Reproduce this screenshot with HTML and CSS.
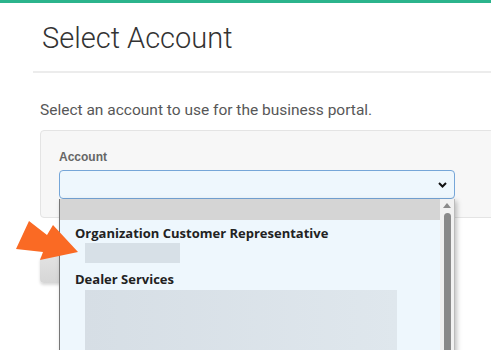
FILE: index.html
```html
<!DOCTYPE html>
<html lang="en">

<head>
  <meta charset="UTF-8">
  <meta name="viewport" content="width=device-width, initial-scale=1.0">
  <title>Select Account</title>
  <link rel="stylesheet" href="styles.css">
</head>

<body>
  <div class="top-bar"></div>

  <div class="header">
    <h1>Select Account</h1>
  </div>

  <div class="content">
    <p class="intro">Select an account to use for the business portal.</p>

    <div class="card">
      <label class="field-label">Account</label>
      <div class="select-wrap">
        <div class="select-box">
          <svg class="chevron" width="9" height="6" viewBox="0 0 9 6">
            <path d="M1 1 L4.5 4.5 L8 1" fill="none" stroke="#111" stroke-width="2" />
          </svg>
        </div>

        <div class="dropdown">
          <div class="option-empty"></div>
          <div class="group">
            <div class="group-title">Organization Customer Representative</div>
            <div class="redacted small"></div>
          </div>
          <div class="group">
            <div class="group-title">Dealer Services</div>
            <div class="redacted large"></div>
          </div>
          <div class="scrollbar">
            <svg class="scroll-up" width="8" height="5" viewBox="0 0 8 5">
              <path d="M0 5 L4 0 L8 5 Z" fill="#8a8a8a" />
            </svg>
            <div class="thumb"></div>
          </div>
        </div>
      </div>
    </div>

    <button class="continue-btn"></button>
  </div>

  <!-- arrow pointing at the first account -->
  <svg class="pointer-arrow" width="80" height="50" viewBox="0 0 80 50">
    <path d="M29 6 L47 20 L53 10 L78 37 L40 45 L43 37 L16 34 Z" fill="#fa6a24" />
  </svg>
</body>

</html>
```

FILE: styles.css
```css
body {
  margin: 0;
  padding: 0;
  background-color: #fff;
  color: #333;
  font-family: "Roboto", sans-serif;
  overflow: hidden;
  height: 350px;
  position: relative;
}

.top-bar {
  height: 3px;
  background-color: #2bb48c;
}

.header {
  margin-left: 33px;
  padding: 17px 0 0 9px;
  height: 51px;
  border-bottom: 2px solid #ececec;
}

.header h1 {
  margin: 0;
  font-size: 29px;
  font-weight: 300;
  line-height: 36px;
  color: #333;
}

.content {
  padding-left: 40px;
}

.intro {
  margin: 0;
  padding-top: 27px;
  font-size: 15.5px;
  line-height: 20px;
  color: #575757;
}

.card {
  margin-top: 10px;
  margin-right: -10px;
  height: 86px;
  padding: 0 18px;
  background-color: #f7f7f7;
  border: 1px solid #e4e4e4;
  border-radius: 4px;
}

.field-label {
  display: block;
  padding-top: 18px;
  font-family: "Liberation Sans", Arial, sans-serif;
  font-size: 12px;
  font-weight: bold;
  line-height: 16px;
  color: #666;
}

.select-wrap {
  position: relative;
  width: 396px;
  margin-top: 5px;
}

.select-box {
  height: 27px;
  background-color: #eef7fd;
  border: 1px solid #76a6d8;
  border-radius: 4px;
  display: flex;
  align-items: center;
  justify-content: flex-end;
  padding-right: 7px;
}

.dropdown {
  position: absolute;
  top: 29px;
  left: 0;
  width: 394px;
  height: 160px;
  background-color: #eef7fd;
  border-left: 1px solid #777;
  border-right: 1px solid #bbb;
  box-shadow: 2px 2px 5px rgba(0, 0, 0, 0.25);
  z-index: 2;
  font-family: "Open Sans", sans-serif;
}

.option-empty {
  height: 21px;
  margin-right: 14px;
  background-color: #d5d5d5;
}

.group {
  padding-left: 15px;
}

.group-title {
  font-size: 13px;
  font-weight: 700;
  line-height: 18px;
  color: #222;
  padding-top: 4px;
}

.redacted {
  margin-left: 10px;
  background-color: #d7e0e7;
}

.redacted.small {
  width: 95px;
  height: 20px;
  margin-top: 1px;
  margin-bottom: 3px;
}

.redacted.large {
  width: 312px;
  height: 80px;
  margin-top: 2px;
  background: linear-gradient(90deg, #d6dee5, #dfe7ed);
}

.scrollbar {
  position: absolute;
  top: 0;
  right: 0;
  width: 14px;
  height: 100%;
  background-color: #f1f1f1;
  display: flex;
  flex-direction: column;
  align-items: center;
}

.scroll-up {
  margin-top: 4px;
}

.thumb {
  width: 7px;
  margin-top: 5px;
  flex: 1;
  background-color: #8a8a8a;
  border-radius: 4px;
}

.continue-btn {
  display: block;
  margin-top: 38px;
  width: 100px;
  height: 27px;
  border: 0;
  border-radius: 4px;
  background: linear-gradient(#e2e2e2, #d6d6d6);
  box-shadow: 0 2px 3px rgba(0, 0, 0, 0.15);
}

.pointer-arrow {
  position: absolute;
  left: 0;
  top: 215px;
  z-index: 3;
}
```
